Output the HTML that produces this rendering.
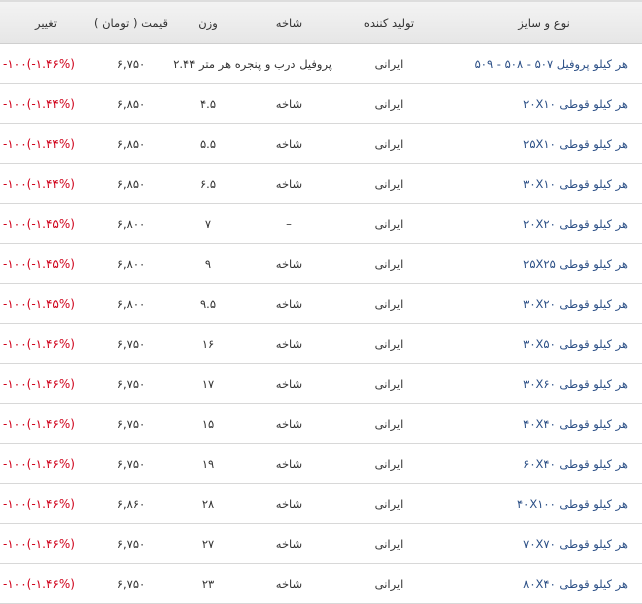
<!DOCTYPE html>
<html><head><meta charset="utf-8"><style>
body{margin:0;width:642px;height:604px;overflow:hidden;background:#fff;font-family:Tahoma,"DejaVu Sans","Noto Sans CJK SC",sans-serif;font-size:11.5px;color:#333}
table{border-collapse:collapse;table-layout:fixed;width:642px}
td,th{height:39px;border-bottom:1px solid #d8d8d8;text-align:center;padding:0;white-space:nowrap;overflow:visible}
th{height:41px;font-weight:normal;background:linear-gradient(#f3f3f3,#e6e6e6);border-top:2px solid #ddd;color:#333;border-bottom:1px solid #cfcfcf}
td.n{text-align:right;padding-right:14px;color:#2b4f86;direction:rtl}
td.c{color:#d0021b;text-align:left;padding-left:3px;font-size:12px}
td.c span{display:inline-block;direction:ltr;unicode-bidi:bidi-override;letter-spacing:0.4px}
td.s{direction:rtl}
</style></head><body>
<table>
<colgroup><col style="width:92px"><col style="width:78px"><col style="width:76px"><col style="width:86px"><col style="width:114px"><col style="width:196px"></colgroup>
<tr><th>تغییر</th><th>قیمت ( تومان )</th><th>وزن</th><th>شاخه</th><th>تولید کننده</th><th>نوع و سایز</th></tr>
<tr><td class="c"><span>-۱۰۰(-۱.۴۶%)</span></td><td>۶,۷۵۰</td><td colspan="2" class="s" style="text-align:left;padding-left:4px">پروفیل درب و پنجره هر متر ۲.۴۴</td><td>ایرانی</td><td class="n">هر کیلو پروفیل ۵۰۷ - ۵۰۸ - ۵۰۹</td></tr>
<tr><td class="c"><span>-۱۰۰(-۱.۴۴%)</span></td><td>۶,۸۵۰</td><td>۴.۵</td><td>شاخه</td><td>ایرانی</td><td class="n">هر کیلو قوطی ۲۰X۱۰</td></tr>
<tr><td class="c"><span>-۱۰۰(-۱.۴۴%)</span></td><td>۶,۸۵۰</td><td>۵.۵</td><td>شاخه</td><td>ایرانی</td><td class="n">هر کیلو قوطی ۲۵X۱۰</td></tr>
<tr><td class="c"><span>-۱۰۰(-۱.۴۴%)</span></td><td>۶,۸۵۰</td><td>۶.۵</td><td>شاخه</td><td>ایرانی</td><td class="n">هر کیلو قوطی ۳۰X۱۰</td></tr>
<tr><td class="c"><span>-۱۰۰(-۱.۴۵%)</span></td><td>۶,۸۰۰</td><td>۷</td><td>–</td><td>ایرانی</td><td class="n">هر کیلو قوطی ۲۰X۲۰</td></tr>
<tr><td class="c"><span>-۱۰۰(-۱.۴۵%)</span></td><td>۶,۸۰۰</td><td>۹</td><td>شاخه</td><td>ایرانی</td><td class="n">هر کیلو قوطی ۲۵X۲۵</td></tr>
<tr><td class="c"><span>-۱۰۰(-۱.۴۵%)</span></td><td>۶,۸۰۰</td><td>۹.۵</td><td>شاخه</td><td>ایرانی</td><td class="n">هر کیلو قوطی ۳۰X۲۰</td></tr>
<tr><td class="c"><span>-۱۰۰(-۱.۴۶%)</span></td><td>۶,۷۵۰</td><td>۱۶</td><td>شاخه</td><td>ایرانی</td><td class="n">هر کیلو قوطی ۳۰X۵۰</td></tr>
<tr><td class="c"><span>-۱۰۰(-۱.۴۶%)</span></td><td>۶,۷۵۰</td><td>۱۷</td><td>شاخه</td><td>ایرانی</td><td class="n">هر کیلو قوطی ۳۰X۶۰</td></tr>
<tr><td class="c"><span>-۱۰۰(-۱.۴۶%)</span></td><td>۶,۷۵۰</td><td>۱۵</td><td>شاخه</td><td>ایرانی</td><td class="n">هر کیلو قوطی ۴۰X۴۰</td></tr>
<tr><td class="c"><span>-۱۰۰(-۱.۴۶%)</span></td><td>۶,۷۵۰</td><td>۱۹</td><td>شاخه</td><td>ایرانی</td><td class="n">هر کیلو قوطی ۶۰X۴۰</td></tr>
<tr><td class="c"><span>-۱۰۰(-۱.۴۶%)</span></td><td>۶,۸۶۰</td><td>۲۸</td><td>شاخه</td><td>ایرانی</td><td class="n">هر کیلو قوطی ۴۰X۱۰۰</td></tr>
<tr><td class="c"><span>-۱۰۰(-۱.۴۶%)</span></td><td>۶,۷۵۰</td><td>۲۷</td><td>شاخه</td><td>ایرانی</td><td class="n">هر کیلو قوطی ۷۰X۷۰</td></tr>
<tr><td class="c"><span>-۱۰۰(-۱.۴۶%)</span></td><td>۶,۷۵۰</td><td>۲۳</td><td>شاخه</td><td>ایرانی</td><td class="n">هر کیلو قوطی ۸۰X۴۰</td></tr>
</table>
</body></html>
